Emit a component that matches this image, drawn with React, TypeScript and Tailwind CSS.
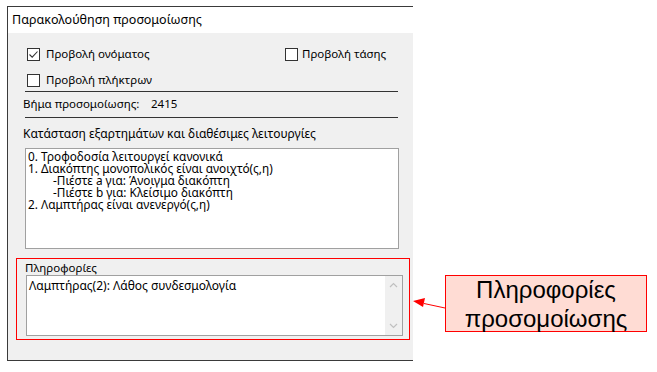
import React from "react";

function Check({ checked }: { checked?: boolean }) {
  return (
    <span className="w-[13px] h-[13px] border border-[#333] bg-white inline-flex items-center justify-center shrink-0">
      {checked && (
        <svg width="11" height="11" viewBox="0 0 11 11">
          <path d="M1.5 5.5 L4.2 8.2 L9.5 2.5" fill="none" stroke="#333" strokeWidth="1.1" />
        </svg>
      )}
    </span>
  );
}

export default function App() {
  const f = { fontFamily: '"Noto Sans", "Open Sans", sans-serif' };
  return (
    <div className="w-[657px] h-[372px] bg-white relative flex items-start pt-[6px] pl-[7px] text-[#000]" style={f}>
      <div className="w-[406px] h-[355px] border-l-[1.5px] border-t border-b-[1.5px] border-[#3a3a3a] flex flex-col">
        <div className="h-[26px] bg-white text-[12.5px] pl-[4px] flex items-center">Παρακολούθηση προσομοίωσης</div>
        <div className="flex-1 bg-[#f0f0f0] text-[12px] leading-[14px] relative">
          <div className="absolute left-[19px] top-[14px] flex items-center gap-[6px] text-[11.5px]">
            <Check checked />
            <span>Προβολή ονόματος</span>
          </div>
          <div className="absolute left-[277px] top-[14px] flex items-center gap-[4px] text-[11.5px]">
            <Check />
            <span>Προβολή τάσης</span>
          </div>
          <div className="absolute left-[19px] top-[40px] flex items-center gap-[6px] text-[11.5px]">
            <Check />
            <span>Προβολή πλήκτρων</span>
          </div>
          <div className="absolute left-[17px] top-[58px] w-[373px] h-px bg-[#333]" />
          <div className="absolute left-[15px] top-[64px] flex text-[11.5px]">
            <span className="w-[128px]">Βήμα προσομοίωσης:</span>
            <span>2415</span>
          </div>
          <div className="absolute left-[17px] top-[84px] w-[373px] h-px bg-[#333]" />
          <div className="absolute left-[15px] top-[94px]">Κατάσταση εξαρτημάτων και διαθέσιμες λειτουργίες</div>
          <div className="absolute left-[17px] top-[115px] w-[374px] h-[101px] bg-white border border-[#a0a0a0] pl-[2px] pt-[1px] text-[11.8px] leading-[12px]">
            <div>0. Τροφοδοσία λειτουργεί κανονικά</div>
            <div>1. Διακόπτης μονοπολικός είναι ανοιχτό(ς,η)</div>
            <div className="pl-[25px]">-Πιέστε a για: Άνοιγμα διακόπτη</div>
            <div className="pl-[25px]">-Πιέστε b για: Κλείσιμο διακόπτη</div>
            <div>2. Λαμπτήρας είναι ανενεργό(ς,η)</div>
          </div>
          <div className="absolute left-[8px] top-[225px] w-[394px] h-[82px] border-[1.5px] border-[#ff0000]">
            <div className="pl-[8px] pt-[2px] h-[16px] text-[11.5px]">Πληροφορίες</div>
            <div className="ml-[9px] w-[377px] h-[61px] bg-white border border-[#a0a0a0] flex">
              <div className="flex-1 pl-[2px] pt-[3px]">Λαμπτήρας(2): Λάθος συνδεσμολογία</div>
              <div className="w-[17px] bg-[#f0f0f0] flex flex-col items-center justify-between py-[6px]">
                <svg width="9" height="6" viewBox="0 0 9 6"><path d="M1 5 L4.5 1.5 L8 5" fill="none" stroke="#c0c0c0" strokeWidth="1.2" /></svg>
                <svg width="9" height="6" viewBox="0 0 9 6"><path d="M1 1 L4.5 4.5 L8 1" fill="none" stroke="#c0c0c0" strokeWidth="1.2" /></svg>
              </div>
            </div>
          </div>
        </div>
      </div>
      <div className="ml-[32px] mt-[269px] w-[202px] h-[57px] bg-[#ffdcd4] border border-[#ff0000] flex flex-col items-center justify-center text-[24px] leading-[29px]" style={{ fontFamily: '"Liberation Sans", Arial, sans-serif' }}>
        <span>Πληροφορίες</span>
        <span>προσομοίωσης</span>
      </div>
      <svg className="absolute left-0 top-0 pointer-events-none" width="657" height="372">
        <line x1="445" y1="308" x2="424" y2="303.5" stroke="#ff0000" strokeWidth="1" />
        <polygon points="413,301 425,298 423,307" fill="#ff0000" />
      </svg>
    </div>
  );
}
